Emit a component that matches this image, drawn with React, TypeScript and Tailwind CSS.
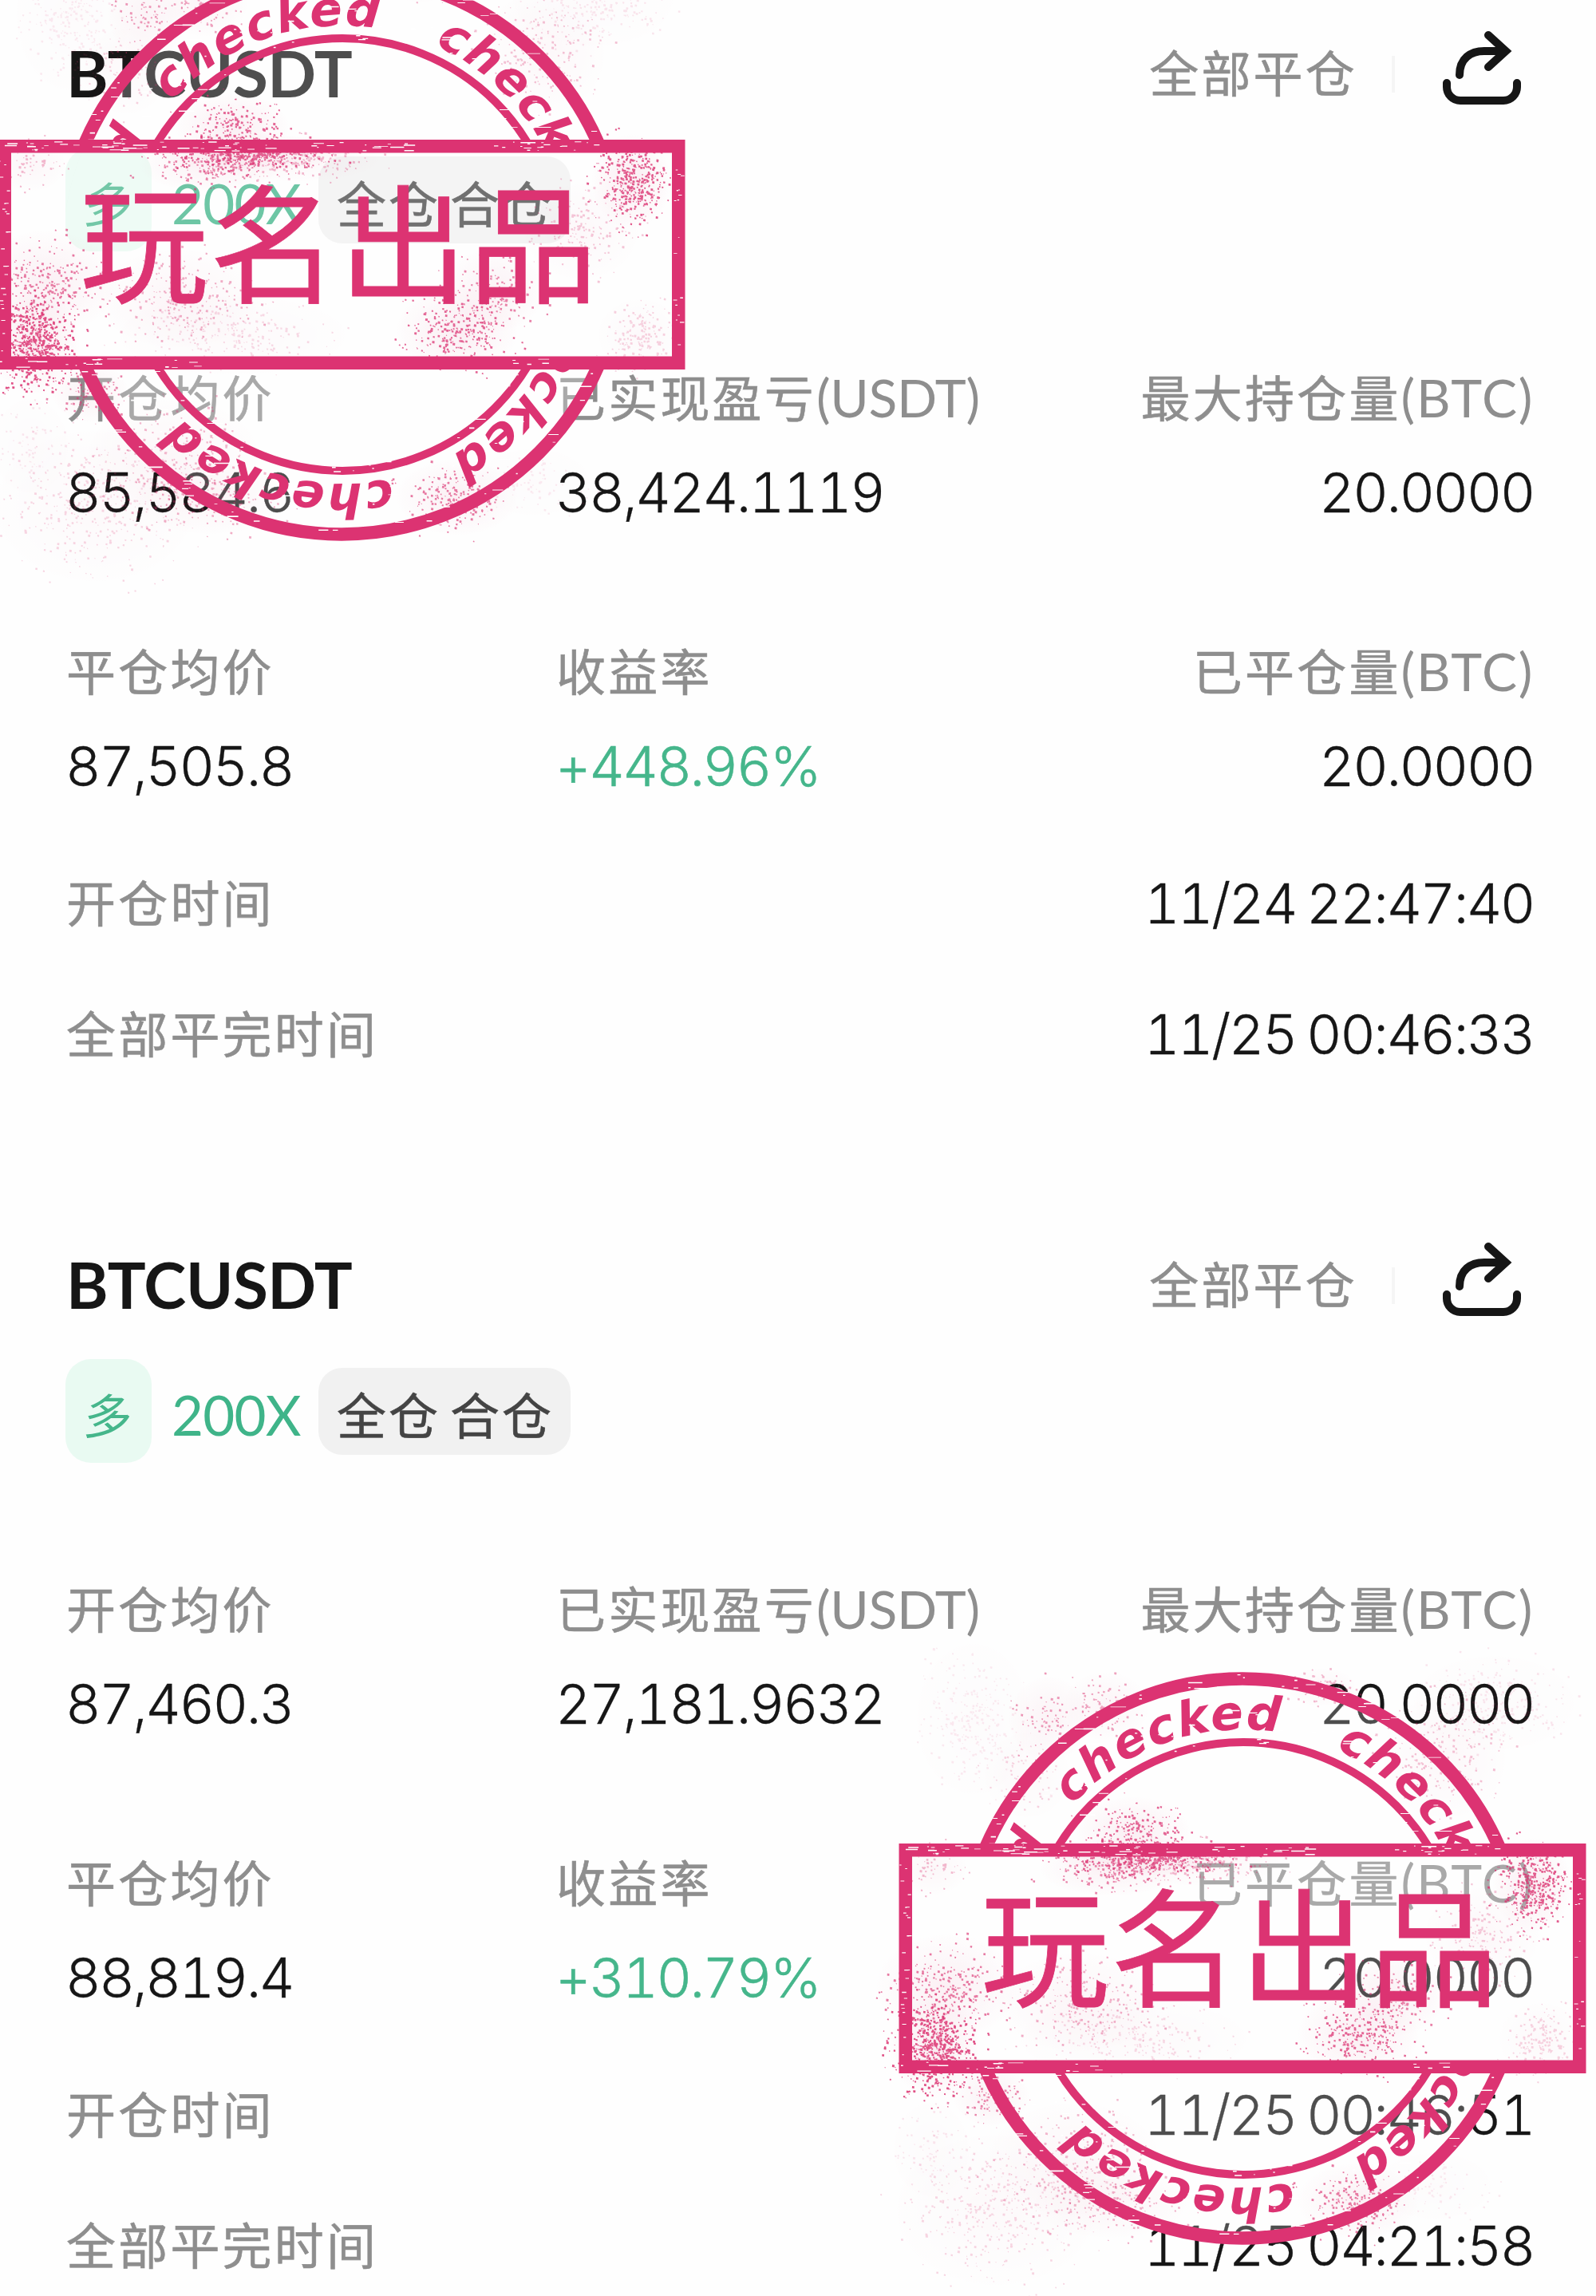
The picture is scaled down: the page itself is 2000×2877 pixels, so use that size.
import { useId } from 'react';

interface Position {
  symbol: string;
  entryPrice: string;
  closePrice: string;
  realizedPnl: string;
  roi: string;
  maxSize: string;
  closedSize: string;
  openedAt: string;
  closedAt: string;
}

const positions: Position[] = [
  {
    symbol: 'BTCUSDT',
    entryPrice: '85,584.6',
    closePrice: '87,505.8',
    realizedPnl: '38,424.1119',
    roi: '+448.96%',
    maxSize: '20.0000',
    closedSize: '20.0000',
    openedAt: '11/24 22:47:40',
    closedAt: '11/25 00:46:33',
  },
  {
    symbol: 'BTCUSDT',
    entryPrice: '87,460.3',
    closePrice: '88,819.4',
    realizedPnl: '27,181.9632',
    roi: '+310.79%',
    maxSize: '20.0000',
    closedSize: '20.0000',
    openedAt: '11/25 00:46:51',
    closedAt: '11/25 04:21:58',
  },
];

function ShareIcon() {
  return (
    <svg width="100" height="96" viewBox="0 0 100 96" fill="none" stroke="#161616" strokeWidth="10">
      <path d="M6 67v5a17 17 0 0 0 17 17h54a17 17 0 0 0 17-17v-5" strokeLinecap="round" />
      <path d="M22 57C22 36 36 27 53 27H78" strokeLinecap="round" />
      <path d="M58 7L80 27L58 47" strokeLinecap="round" strokeLinejoin="miter" />
    </svg>
  );
}

function Label({ text, unit }: { text: string; unit?: string }) {
  return (
    <div className="h-[64px] text-[62px] leading-[60px] tracking-[3.2px] text-[#8e8e8e] whitespace-nowrap font-['Noto_Sans_CJK_SC',sans-serif] [-webkit-text-stroke:0.6px_#8e8e8e]">
      {text}
      {unit && (
        <span
          className={`font-['Lato',sans-serif] text-[66px] [-webkit-text-stroke:0px] ${
            unit === 'BTC' ? 'tracking-[1.7px]' : 'tracking-[-0.3px]'
          }`}
        >
          ({unit})
        </span>
      )}
    </div>
  );
}

function Value({ text, green }: { text: string; green?: boolean }) {
  return (
    <div
      className={`h-[70px] text-[69px] leading-[72px] tracking-[-2.5px] [word-spacing:-3px] whitespace-nowrap font-light tabular-nums font-['Inter',sans-serif] ${
        green ? 'text-[#45b68b] [-webkit-text-stroke:0.5px_#45b68b]' : 'text-[#161616] [-webkit-text-stroke:0.3px_#161616]'
      }`}
    >
      {text}
    </div>
  );
}

function Field({ label, unit, value, green, right }: { label: string; unit?: string; value: string; green?: boolean; right?: boolean }) {
  return (
    <div className={`flex flex-col gap-[51px] ${right ? 'items-end' : 'items-start'}`}>
      <Label text={label} unit={unit} />
      <div className={right ? '' : '-ml-px'}>
        <Value text={value} green={green} />
      </div>
    </div>
  );
}

function PositionCard({ position }: { position: Position }) {
  return (
    <section className="pl-[83px] pr-[78px]">
      {/* Cabeçalho */}
      <div className="flex h-[120px] items-center justify-between">
        <h2 className="-mt-[4px] text-[80px] leading-[80px] font-bold tracking-[-0.4px] text-[#161616] font-['Lato',sans-serif]">
          {position.symbol}
        </h2>
        <div className="flex items-center pr-[15px]">
          <div className="-mt-[4px]">
            <Label text="全部平仓" />
          </div>
          <div className="ml-[43px] h-[46px] w-[4px] bg-[#f5f5f5]" />
          <div className="ml-[59px] mt-[-16px]">
            <ShareIcon />
          </div>
        </div>
      </div>

      {/* Etiquetas */}
      <div className="mt-[32px] flex h-[130px] items-center font-['Noto_Sans_CJK_SC',sans-serif]">
        <div className="-ml-px flex h-[130px] w-[108px] items-center justify-center rounded-[32px] bg-[#e9faf2] pt-[5px] text-[60px] leading-none text-[#45b68b]">
          <span className="-skew-x-6">多</span>
        </div>
        <div className="ml-[25px] w-[184px] pt-[10px] text-[69px] leading-[70px] tracking-[-0.8px] font-['Lato',sans-serif] text-[#3fb489]">
          200X
        </div>
        <div className="flex h-[109px] w-[316px] items-center justify-center rounded-[30px] bg-[#f1f1f1] pt-[6px] pl-[2px] text-[62px] leading-none tracking-[3px] [word-spacing:-5px] text-[#444] whitespace-nowrap [-webkit-text-stroke:0.6px_#444]">
          全仓 合仓
        </div>
      </div>

      {/* Valores */}
      <div className="mt-[151px] grid grid-cols-[614px_614px_1fr] gap-y-[158px]">
        <Field label="开仓均价" value={position.entryPrice} />
        <Field label="已实现盈亏" unit="USDT" value={position.realizedPnl} />
        <Field label="最大持仓量" unit="BTC" value={position.maxSize} right />
        <Field label="平仓均价" value={position.closePrice} />
        <Field label="收益率" value={position.roi} green />
        <Field label="已平仓量" unit="BTC" value={position.closedSize} right />
      </div>

      <div className="mt-[102px] flex flex-col gap-[94px]">
        <div className="flex items-center justify-between">
          <Label text="开仓时间" />
          <Value text={position.openedAt} />
        </div>
        <div className="flex items-center justify-between">
          <Label text="全部平完时间" />
          <Value text={position.closedAt} />
        </div>
      </div>
    </section>
  );
}

// x, y, rx, ry, count, opacity
const sprays = [
  [-243, -300, 42, 45, 150, 0.5],
  [-171, -316, 45, 36, 110, 0.45],
  [-137, -160, 60, 36, 200, 0.75],
  [-118, -128, 100, 20, 560, 0.75],
  [-60, -120, 90, 24, 240, 0.35],
  [-165, -112, 75, 28, 150, 0.6],
  [363, -92, 42, 50, 420, 0.8],
  [-385, 110, 48, 55, 680, 0.85],
  [-370, 35, 75, 55, 260, 0.65],
  [-205, 55, 85, 52, 240, 0.4],
  [145, 95, 64, 46, 280, 0.75],
  [190, 45, 54, 44, 140, 0.6],
  [-137, 101, 120, 42, 230, 0.18],
  [374, 101, 44, 38, 180, 0.22],
  [300, -29, 60, 50, 180, 0.28],
  [-389, -113, 36, 28, 60, 0.35],
  [145, 304, 64, 40, 210, 0.65],
  [-211, 252, 90, 60, 240, 0.35],
  [-165, 305, 80, 38, 180, 0.4],
  [-309, 315, 105, 80, 380, 0.2],
  [-315, 172, 40, 32, 110, 0.6],
  [-337, -300, 60, 80, 280, 0.1],
  [253, -253, 65, 65, 200, 0.3],
  [315, -320, 85, 50, 280, 0.12],
  [99, -340, 36, 20, 90, 0.35],
  [-270, -230, 45, 45, 90, 0.22],
  [-390, 240, 40, 50, 80, 0.12],
  [240, 285, 60, 35, 80, 0.1],
];

function random(seed: number) {
  let s = seed;
  return () => {
    s = (s * 16807) % 2147483647;
    return s / 2147483647;
  };
}

function sprayPath([cx, cy, rx, ry, count]: number[], seed: number) {
  const next = random(seed * 7919 + 13);
  let d = '';
  for (let i = 0; i < count; i++) {
    const angle = next() * Math.PI * 2;
    const r = Math.min(Math.sqrt(-2 * Math.log(next() + 0.0001)) * 0.5, 1.4);
    const x = cx + Math.cos(angle) * r * rx;
    const y = cy + Math.sin(angle) * r * ry;
    const size = 1 + next() * 2;
    d += `M${x.toFixed(1)} ${y.toFixed(1)}l${size.toFixed(1)} 0.4l-0.3 ${size.toFixed(1)}l-${size.toFixed(1)} -0.5z`;
  }
  return d;
}

function scratch(x: number, y: number, w: number, h: number) {
  return `M${x.toFixed(1)} ${y.toFixed(1)}h${w.toFixed(1)}v${h.toFixed(1)}h-${w.toFixed(1)}z`;
}

function ringScratches() {
  const next = random(4242);
  let d = '';
  for (let i = 0; i < 230; i++) {
    const angle = next() * Math.PI * 2;
    const band = next();
    const r = band < 0.4 ? 342 + next() * 16 : band < 0.6 ? 266 + next() * 10 : 288 + next() * 42;
    d += scratch(Math.cos(angle) * r - 5, Math.sin(angle) * r, 2 + next() * next() * 24, 0.8 + next() * 0.9);
  }
  return d;
}

function frameScratches() {
  const next = random(977);
  let d = '';
  for (let i = 0; i < 22; i++) {
    const cx = -405 + next() * 800;
    const top = next() < 0.6;
    for (let j = 0; j < 5; j++) {
      const y = (top ? -142.5 : 129.5) + next() * 12;
      d += scratch(cx + next() * 50 - 25, y, 1.5 + next() * next() * 24, 0.7 + next() * 0.9);
    }
  }
  for (let i = 0; i < 40; i++) {
    const left = next() < 0.5;
    d += scratch((left ? -430 : 414) + next() * 11, -120 + next() * 240, 1.5 + next() * 4, 0.8 + next() * 0.6);
  }
  return d;
}

function Stamp() {
  const id = useId();
  return (
    <svg width="920" height="840" viewBox="-460 -420 920 840" overflow="visible">
      <defs>
        <path id={`${id}arc`} d="M0 -287A287 287 0 0 1 0 287A287 287 0 0 1 0 -287" />
        <clipPath id={`${id}outside`}>
          <path d="M-460 -420H460V-144H-460zM-460 144H460V420H-460z" />
        </clipPath>
        <radialGradient id={`${id}haze`}>
          <stop offset="0" stopColor="#dc3372" stopOpacity="0.1" />
          <stop offset="1" stopColor="#dc3372" stopOpacity="0" />
        </radialGradient>
      </defs>

      <g fill="#fff" opacity="0.24">
        <circle r="350" />
        <path d="M-430 -144H-319A350 350 0 0 0 -319 144H-430zM319 -144H430V144H319A350 350 0 0 0 319 -144z" />
      </g>

      {sprays.map((spray, i) => (
        <g key={i} opacity={spray[5]}>
          <ellipse cx={spray[0]} cy={spray[1]} rx={spray[2] * 1.2} ry={spray[3] * 1.2} fill={`url(#${id}haze)`} />
          <path d={sprayPath(spray, i + 1)} fill="#dc3372" />
        </g>
      ))}

      <g clipPath={`url(#${id}outside)`}>
        <circle r="350.5" fill="none" stroke="#dc3372" strokeWidth="16.5" />
        <circle cx="1" r="271" fill="none" stroke="#dc3372" strokeWidth="10" />
        {[-48, 24, 94.5, 167.5, 244].map((angle) => (
          <text
            key={angle}
            transform={`rotate(${angle})`}
            className="font-['DejaVu_Sans',sans-serif] text-[60px] font-bold italic"
            fill="#dc3372"
          >
            <textPath href={`#${id}arc`} textLength="287" lengthAdjust="spacing">
              checked
            </textPath>
          </text>
        ))}
        <path d={ringScratches()} fill="#fff" />
      </g>

      <rect x="-422.25" y="-135.75" width="844.5" height="271.5" fill="none" stroke="#dc3372" strokeWidth="16.5" />
      <path d={frameScratches()} fill="#fff" />
      <text
        x="-328"
        y="48.5"
        fill="#dc3372"
        stroke="#dc3372"
        strokeWidth="0.8"
        className="font-['Noto_Sans_CJK_SC',sans-serif] text-[161px] tracking-[1.5px] font-normal"
      >
        玩名出品
      </text>
    </svg>
  );
}

export default function App() {
  return (
    <main className="relative h-[2877px] w-[2000px] overflow-hidden bg-[#fefefe] pt-[33px]">
      <div className="flex flex-col gap-[221px]">
        {positions.map((position) => (
          <PositionCard key={position.closedAt} position={position} />
        ))}
      </div>

      {/* Carimbos */}
      <div className="pointer-events-none absolute left-[-32px] top-[-101px]">
        <Stamp />
      </div>
      <div className="pointer-events-none absolute left-[1097px] top-[2034px]">
        <Stamp />
      </div>
    </main>
  );
}
